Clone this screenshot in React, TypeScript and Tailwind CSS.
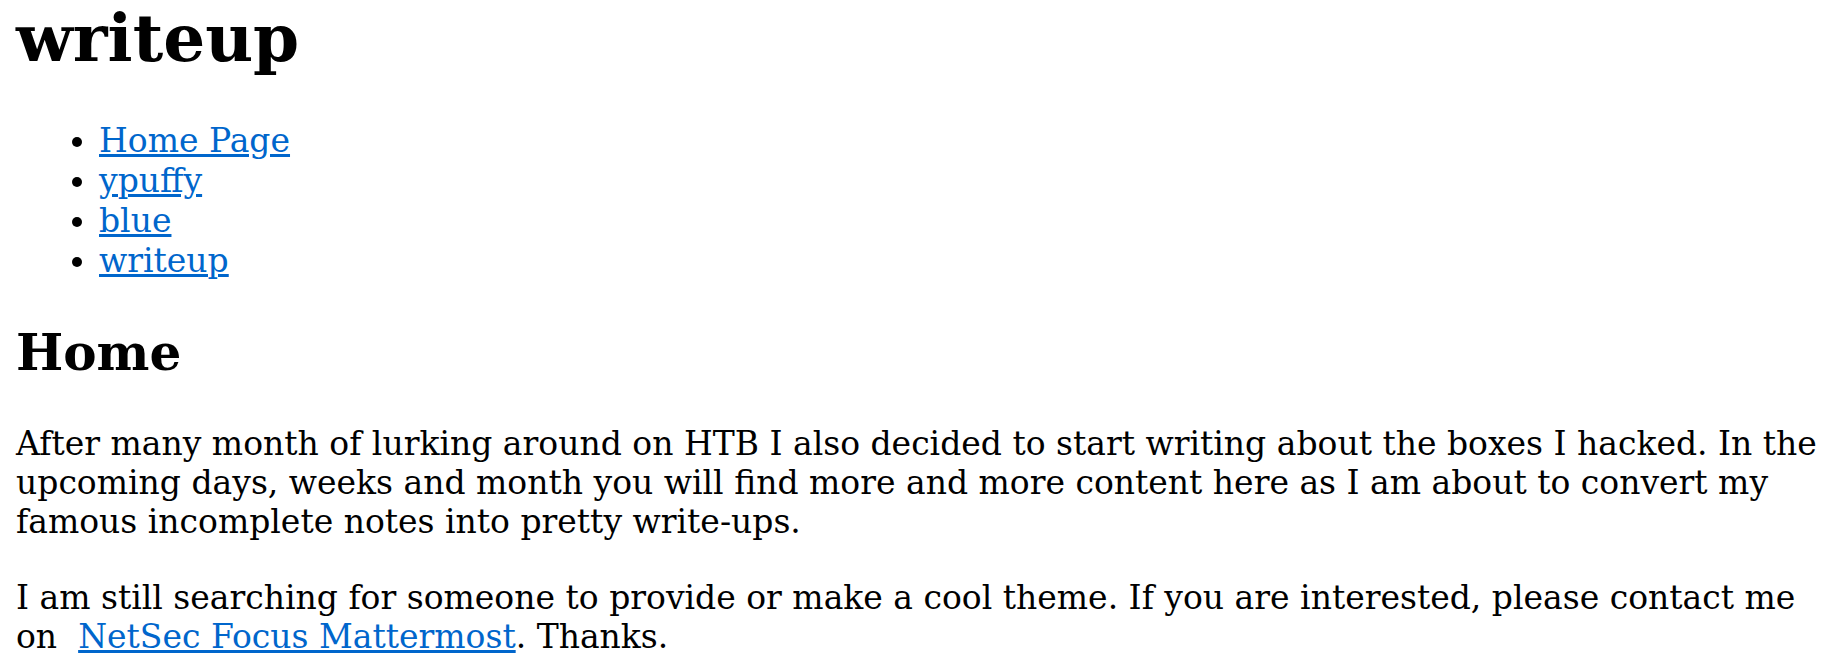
export default function App() {
	const links = ["Home Page", "ypuffy", "blue", "writeup"];

	return (
		<div className="pl-4 font-['DejaVu_Serif',serif] text-[33px] leading-[39px] text-black">
			<h1 className="-mt-px mb-[44px] text-[66px] font-bold leading-[normal]">writeup</h1>
			<ul className="my-[33px] list-disc pl-[83px] leading-[40px]">
				{links.map((label) => (
					<li key={label}>
						<a href="#" className="text-[#0066cc] underline">
							{label}
						</a>
					</li>
				))}
			</ul>
			<h2 className="my-[42px] text-[50px] font-bold leading-[normal]">Home</h2>
			<p className="my-[37px]">
				After many month of lurking around on HTB I also decided to start writing about the
				boxes I hacked. In the upcoming days, weeks and month you will find more and more
				content here as I am about to convert my famous incomplete notes into pretty write-ups.
			</p>
			<p className="my-[37px]">
				I am still searching for someone to provide or make a cool theme. If you are
				interested, please contact me on{"\u00a0"}{" "}
				<a href="#" className="text-[#0066cc] underline">
					NetSec Focus Mattermost
				</a>
				. Thanks.
			</p>
		</div>
	);
}
